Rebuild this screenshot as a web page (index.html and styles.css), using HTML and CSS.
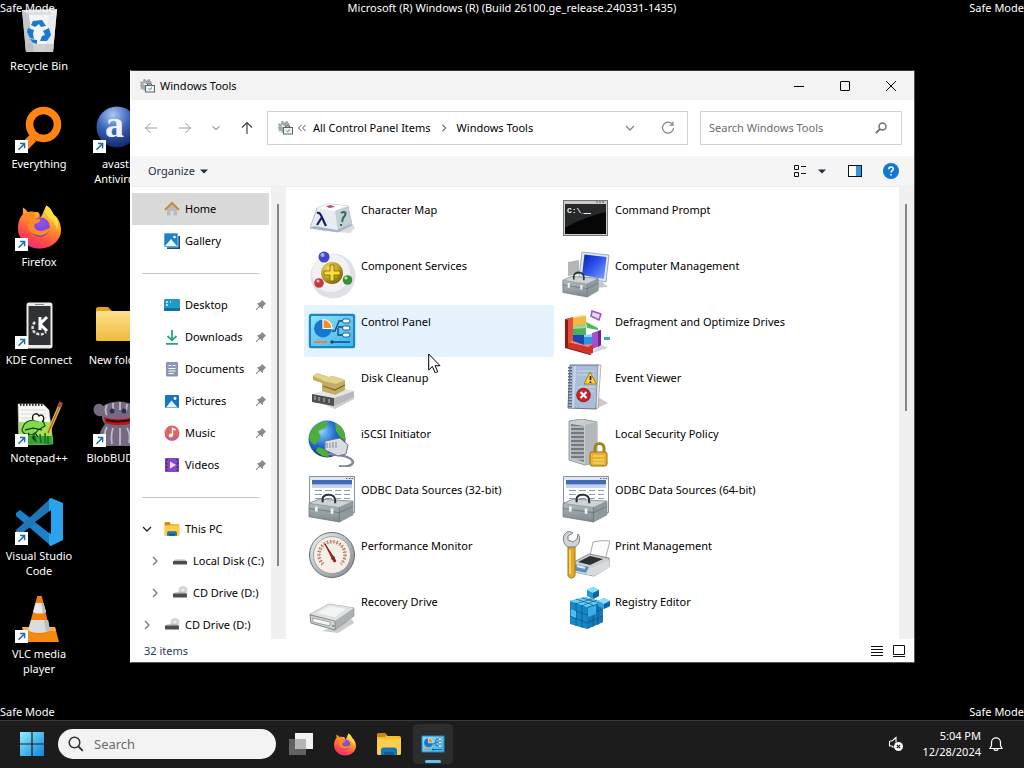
FILE: index.html
```html
<!DOCTYPE html>
<html lang="en">

<head>
    <meta charset="UTF-8">
    <title>Windows Tools</title>
    <link rel="stylesheet" href="styles.css">
</head>

<body>

<!-- icons used more than once -->
<svg class="defs" width="0" height="0">
    <defs>
        <linearGradient id="steel" x1="0" y1="0" x2="1" y2="1"><stop offset="0" stop-color="#f4f6f7"/><stop offset=".5" stop-color="#b4bcc0"/><stop offset="1" stop-color="#7d888d"/></linearGradient>
        <linearGradient id="boxfront" x1="0" y1="0" x2="0" y2="1"><stop offset="0" stop-color="#bcc6c9"/><stop offset="1" stop-color="#7e898d"/></linearGradient>
        <linearGradient id="screen" x1="0" y1="0" x2="1" y2="1"><stop offset="0" stop-color="#0a1fb0"/><stop offset=".45" stop-color="#2b50ea"/><stop offset="1" stop-color="#7fa6f5"/></linearGradient>
        <linearGradient id="gold" x1="0" y1="0" x2="0" y2="1"><stop offset="0" stop-color="#ffe08a"/><stop offset="1" stop-color="#efb93f"/></linearGradient>
        <linearGradient id="ffbody" x1=".8" y1="0" x2=".3" y2="1"><stop offset="0" stop-color="#fff04d"/><stop offset=".4" stop-color="#ff9a28"/><stop offset=".75" stop-color="#ff4b45"/><stop offset="1" stop-color="#ef2a80"/></linearGradient>
        <radialGradient id="ffcore" cx=".55" cy=".3" r=".8"><stop offset="0" stop-color="#a04cf0"/><stop offset="1" stop-color="#4b49c8"/></radialGradient>
        <linearGradient id="cplbg" x1="0" y1="0" x2="1" y2="1"><stop offset="0" stop-color="#8fe0fa"/><stop offset="1" stop-color="#43b4e8"/></linearGradient>
        <radialGradient id="globe" cx=".35" cy=".3" r=".75"><stop offset="0" stop-color="#8fd0ff"/><stop offset=".5" stop-color="#1f6fd0"/><stop offset="1" stop-color="#0c2c80"/></radialGradient>
        <radialGradient id="brass" cx=".35" cy=".3" r=".8"><stop offset="0" stop-color="#f5e06a"/><stop offset=".6" stop-color="#b79a1e"/><stop offset="1" stop-color="#6d5a0a"/></radialGradient>
        <radialGradient id="avastball" cx=".4" cy=".2" r=".9"><stop offset="0" stop-color="#a9c8f5"/><stop offset=".45" stop-color="#3a62b8"/><stop offset="1" stop-color="#0b1a55"/></radialGradient>
        <linearGradient id="winlogo" x1="0" y1="0" x2="1" y2="1"><stop offset="0" stop-color="#8ff0ff"/><stop offset="1" stop-color="#0c84dc"/></linearGradient>
    </defs>
    <symbol id="shortcut" viewBox="0 0 13 13">
        <rect width="13" height="13" fill="#fff"/>
        <path d="M3.500 9.800 9 4.200M5 3.600h4.600v4.600" fill="none" stroke="#1d6ba8" stroke-width="1.500"/>
    </symbol>
    <symbol id="pin" viewBox="0 0 12 12">
        <path d="M7 .8 11.200 5 9.800 5.600 8.200 7.600 7.600 10.200 5.200 7.800 1.400 11.200.8 10.600 4.200 6.800 1.800 4.400 4.400 3.800 6.400 2.200z" fill="#8a8a8a"/>
    </symbol>
    <symbol id="tools" viewBox="0 0 16 16">
        <path d="M4.500 1h2l.4 1.400h1L9 1.200h1.800l.4 1.600 1.300.4V6H6v6.500H4.600L3.900 11l-1.400.6-1-1.100.7-1.400L1 8.500V7l1.200-.8L.8 4.400l1.400-1.200 1.600.7z" fill="#a3a8ab"/>
        <circle cx="5.600" cy="6" r="1.300" fill="#e4e7e9"/>
        <path d="M8.500 7.500V6h4v1.500" fill="none" stroke="#5c666c"/>
        <rect x="6.500" y="7.500" width="9" height="6.500" fill="#f1f4f5" stroke="#56666e"/>
        <path d="m9.300 10.500 1.300 1.300L13 9.500" fill="none" stroke="#46677c"/>
    </symbol>
    <symbol id="firefox" viewBox="0 0 48 48">
        <path d="M31 3c5 3 6 7 8 10 3 1 7 8 7 15 0 11-10 19-22 19S2 38 2 26c0-6 2-11 5-14V5c2 1 4 3 5 5 3-1 5-1 8 0 3-1 5 2 4 5 3 0 4-7 7-12z" fill="url(#ffbody)"/>
        <circle cx="24.500" cy="25" r="10" fill="url(#ffcore)"/>
        <path d="M7 12c4-2 8-2 13-2-2 2-2 4 0 6l5 1c0 3-4 4-6 5-1 4 2 7 6 7 5 0 7-3 10-3-2 6-8 9-14 7C13 31 10 24 13 18l-6-6z" fill="#ff8a22"/>
        <path d="M31 3c5 3 6 7 8 10 3 3 5 9 3 15-1-5-4-10-8-12-3-3-5-8-3-13z" fill="#ffdf3e"/>
    </symbol>
    <symbol id="explorer" viewBox="0 0 26 24">
        <path d="M1 3c0-1 .6-2 2-2h6l2.500 3H23c1.200 0 2 .7 2 2v15c0 1-.7 2-2 2H3c-1.200 0-2-.8-2-2z" fill="#f5bc2d"/>
        <path d="M1 3c0-1 .6-2 2-2h6l1.500 2L9 5H1z" fill="#c8860c"/>
        <path d="M1 7h24v14c0 1-.7 2-2 2H3c-1.200 0-2-.8-2-2z" fill="#fdce4e"/>
        <path d="M5 23v-5c0-1.600 1-2.500 2.500-2.500h11c1.600 0 2.500 1 2.500 2.500v5z" fill="#1677b8"/>
        <path d="M8 23v-3h10v3z" fill="#0f5c93"/>
    </symbol>
    <symbol id="cpl" viewBox="0 0 48 36">
        <rect x=".8" y=".8" width="46.400" height="34.400" rx="2.500" fill="#1c86c8"/>
        <rect x="3" y="3" width="42" height="30" rx="1" fill="url(#cplbg)"/>
        <circle cx="15" cy="15.500" r="9" fill="#1479cc"/>
        <path d="M15 15.500V6.500a9 9 0 0 1 9 9z" fill="#ff8a1f" stroke="#fff" stroke-width="1.200"/>
        <path d="M24 18h3l4-10h4M30 14h5M30 15v7h5" fill="none" stroke="#0d4c7c" stroke-width="1.300"/>
        <g fill="#fff" stroke="#135f96"><rect x="34.500" y="6" width="7.500" height="4" rx="2"/><rect x="34.500" y="13" width="7.500" height="4" rx="2"/><rect x="34.500" y="20" width="7.500" height="4" rx="2"/></g>
        <path d="M6 29h13" stroke="#e7852c" stroke-width="2"/>
        <path d="M23 29h19" stroke="#1668a6" stroke-width="2"/>
        <circle cx="24" cy="29" r="1.800" fill="#0d4c7c"/>
    </symbol>
    <symbol id="toolbox" viewBox="0 0 44 29" preserveAspectRatio="none">
        <path d="m1 10 10-4 32 2v13l-13 7L1 23z" fill="url(#boxfront)" stroke="#69757b" stroke-width=".7"/>
        <path d="m1 10 10-4 32 2-13 6z" fill="#cdd4d6" stroke="#7b868b" stroke-width=".5"/>
        <path d="m30 14 13-6v13l-13 7z" fill="#8f9a9e"/>
        <path d="m1 15 29 4 13-6M30 14v14" fill="none" stroke="#68747a" stroke-width=".8"/>
        <path d="M14 9V6c0-6 12-6 12 1v3" fill="none" stroke="#2d3336" stroke-width="2"/>
        <path d="M8 13v5M23 15v5" stroke="#f1f4f4" stroke-width="2.500"/>
    </symbol>
    <symbol id="odbc" viewBox="0 0 48 48">
        <path d="M1.500 1.500h45v36h-45z" fill="#fff" stroke="#8793a0"/>
        <path d="M2 2h44v3H2z" fill="#dfe6ee"/>
        <path d="M4 5h40v4.500H4z" fill="#4568b6"/>
        <path d="M4 10h40v3H4z" fill="#c3d3ec"/>
        <path d="M38 3.500h1.500m1.500 0h1.500m1 0H45" stroke="#5a6a80"/>
        <path d="M7 15.500h7m3 0h7m3 0h6m3 0h6M7 19.500h7m3 0h7m3 0h6m3 0h6M7 23.500h7m3 0h7m3 0h6m3 0h6M36 27.500h6" stroke="#8d9bab" stroke-width="1.200"/>
        <use href="#toolbox" x="0" y="18" width="46" height="30"/>
    </symbol>
    <symbol id="cd" viewBox="0 0 16 16">
        <circle cx="11" cy="5.500" r="4.500" fill="#d6d6d6"/><circle cx="11" cy="5.500" r="1.300" fill="#f7f7f7"/>
        <path d="m3 7.500 9-1 2.500 2h-13z" fill="#b9b9b9"/><rect x="1" y="8.500" width="14" height="4" rx=".5" fill="#4a4d50"/>
    </symbol>
    <symbol id="chevron" viewBox="0 0 10 10"><path d="m3 1 4 4-4 4" fill="none" stroke="currentColor" stroke-width="1.300"/></symbol>
    <symbol id="chevron-down" viewBox="0 0 10 10"><path d="m1 3 4 4 4-4" fill="none" stroke="currentColor" stroke-width="1.300"/></symbol>
</svg>

<main class="desktop">

    <div class="icons">
        <a class="shortcut" href="#">
            <svg class="pic" viewBox="0 0 48 48">
                <path d="m7 2 35-1-4 43H11z" fill="#dcdfe2"/>
                <path d="m7 2 7 5 5 37h-8z" fill="#c3c7ca"/><path d="m42 1-8 6-4 37h8z" fill="#e9ebed"/>
                <path d="M14 7h20l-4 37H19z" fill="#f3f4f5"/><path d="M10 36h29l-1 8H11z" fill="#bcb9b6" opacity=".6"/>
                <g fill="#1a78cf"><path d="m18 13 9-1 4 6-5 1-2-3-4 3-4-2z"/><path d="m13 20 6 2-1 4 1 5-4-1-3-6z"/><path d="m34 20 2 7-4 6h-7l2-5 3-1-2-4z"/><path d="m15 31 7 1v4l-4-1z"/></g>
            </svg>
            <span>Recycle Bin</span>
        </a>
        <a class="shortcut" href="#">
            <svg class="pic" viewBox="0 0 48 48">
                <path d="m18 32-9 9" stroke="#ff8412" stroke-width="9"/><circle cx="28.500" cy="18.500" r="14" fill="none" stroke="#ff8412" stroke-width="7.500"/>
                <use href="#shortcut" x="0" y="34" width="13" height="13"/>
            </svg>
            <span>Everything</span>
        </a>
        <a class="shortcut" href="#">
            <svg class="pic" viewBox="0 0 48 48"><use href="#firefox" x="1" y="-2" width="47" height="48"/><use href="#shortcut" x="0" y="34" width="13" height="13"/></svg>
            <span>Firefox</span>
        </a>
        <a class="shortcut" href="#">
            <svg class="pic" viewBox="0 0 48 48">
                <rect x="12.500" y="1.500" width="24" height="44" rx="1.500" fill="#2f3235" stroke="#e9ebec" stroke-width="2"/>
                <path d="M13 43h23v3H13zM13 1h23v3H13z" fill="#e9ebec"/><path d="M20 2.500h9" stroke="#888"/>
                <path d="M25 15v13M32 15l-7 7 7 7" fill="none" stroke="#fff" stroke-width="3"/>
                <path d="M20 20c-4 4-3 11 3 12 3 1 6 0 8-2" fill="none" stroke="#ddd" stroke-width="2.500" stroke-dasharray="3 1.500"/>
                <use href="#shortcut" x="0" y="34" width="13" height="13"/>
            </svg>
            <span>KDE Connect</span>
        </a>
        <a class="shortcut" href="#">
            <svg class="pic" viewBox="0 0 48 48">
                <path d="M3 4h25l6 6 4 34-34 1z" fill="#f7f8f2" stroke="#bbb" stroke-width=".6"/>
                <path d="M4 22h32l2 22-34 1z" fill="#a6df55"/><path d="M12 36h25l1 8-32 1z" fill="#36a436"/>
                <path d="M5 4.500h23" stroke="#333" stroke-width="3" stroke-dasharray="1.500 1.500"/>
                <path d="M6 10h25M6 14h25M6 18h25" stroke="#c8d3dc" stroke-width=".8"/>
                <path d="M8 27c2-6 8-8 14-6l6-1 2 6-7 4c-2 4-7 6-12 4-4-1-5-4-3-7z" fill="#7fdc48" stroke="#154c12" stroke-width="1.200"/>
                <path d="M18 20c-2-6 4-8 6-4 3-3 7 2 3 6" fill="#fff" stroke="#111" stroke-width="1.300"/><path d="m10 30 8-2 9 2M14 33l-3 5M20 33l3 4" fill="none" stroke="#111" stroke-width="1.200"/>
                <path d="m17 38 2-4 2 8m4-8 1 9m4-10v10m3-7v8" stroke="#136b19" stroke-width="1.500"/>
                <path d="M46 3 33 33" stroke="#e4b145" stroke-width="3.500"/><path d="M46 3 33 33" stroke="#8d5b1c" stroke-width="1"/><path d="m46 2-2 5" stroke="#a0434b" stroke-width="3.500"/>
                <use href="#shortcut" x="0" y="34" width="13" height="13"/>
            </svg>
            <span>Notepad++</span>
        </a>
        <a class="shortcut" href="#">
            <svg class="pic" viewBox="0 0 48 48">
                <path d="M1 15 5 12l33 26-3 9L1 18z" fill="#1982cb"/><path d="M1 32 36 0l3 10L5 37l-4-3z" fill="#1e76b8"/>
                <path d="m36 0 12 5v37l-12 6-2-1V1z" fill="#29a3ee"/><path d="M36 12v24L20 24z" fill="#000"/>
                <use href="#shortcut" x="0" y="34" width="13" height="13"/>
            </svg>
            <span>Visual Studio Code</span>
        </a>
        <a class="shortcut" href="#">
            <svg class="pic" viewBox="0 0 48 48">
                <path d="m7 31 33 0 4 15H11z" fill="#f58a11"/><path d="M7 31h33l1 4H9z" fill="#ffad3c"/>
                <path d="M22 1c0-2 5-2 5 0l8 34c-3 5-19 5-22 0z" fill="#f2800f"/>
                <path d="m20.500 7 8 0 2.500 9c-3 2-10 2-13 0z" fill="#e9e9e9"/><path d="m16 24 17 0 2 10c-3 4-19 4-22 0z" fill="#dcdcdc"/>
                <path d="m26 7 2.500 0 2.500 9-3 1zM29 24h4l2 10-4 2z" fill="#bdbdbd"/>
                <use href="#shortcut" x="0" y="34" width="13" height="13"/>
            </svg>
            <span>VLC media player</span>
        </a>
        <a class="shortcut second row-2" href="#">
            <svg class="pic" viewBox="0 0 48 48">
                <circle cx="24" cy="21" r="20.500" fill="url(#avastball)"/>
                <text class="avast-a" x="12" y="31">a</text>
                <use href="#shortcut" x="0" y="34" width="13" height="13"/>
            </svg>
            <span>avast! Antivirus</span>
        </a>
        <a class="shortcut second row-4" href="#">
            <svg class="pic" viewBox="0 0 48 48">
                <path d="M3 7c0-1 1-2 2-2h10l4 4h25v10H3z" fill="#e0a311"/><rect x="3" y="9" width="44" height="30" rx="1.500" fill="url(#gold)"/>
            </svg>
            <span>New folder</span>
        </a>
        <a class="shortcut second row-5" href="#">
            <svg class="pic" viewBox="0 0 48 48">
                <path d="M1 7c2-4 7-4 9-1 8-6 24-6 31 0 4 4 2 10 0 13 6 7 6 22 1 27H8c-3-7-2-15 4-22-2-2-3-5-3-8-5 1-10-3-8-9z" fill="#776a80"/>
                <path d="M14 5c-2 4-2 7 0 10M20 3v9M27 2v8M34 4l-1 8M14 27c-3 5-3 10-2 16M20 28c-2 6-2 10-1 16M27 28v17M34 28c3 5 3 10 2 15" stroke="#c2b7c9" stroke-width="1.800" fill="none"/>
                <path d="M11 17c8 3 18 3 29 0l-1 6c-8 3-18 3-27 0z" fill="#b8181c"/><path d="M13 20c8 2 16 2 25 0" stroke="#3c0508" stroke-width="2" fill="none"/>
                <circle cx="19" cy="11" r="2.500" fill="#243258"/><circle cx="31" cy="11" r="2.500" fill="#243258"/>
                <use href="#shortcut" x="0" y="34" width="13" height="13"/>
            </svg>
            <span>BlobBUDDY</span>
        </a>
    </div>

    <span class="mark mark-tl">Safe Mode</span>
    <span class="mark mark-top">Microsoft (R) Windows (R) (Build 26100.ge_release.240331-1435)</span>
    <span class="mark mark-tr">Safe Mode</span>
    <span class="mark mark-bl">Safe Mode</span>
    <span class="mark mark-br">Safe Mode</span>

    <section class="window">
        <header class="titlebar">
            <svg class="i16"><use href="#tools"/></svg>
            <h1>Windows Tools</h1>
            <button type="button" aria-label="Minimize"><svg viewBox="0 0 12 12"><path d="M1 6.500h10" stroke="#000"/></svg></button>
            <button type="button" aria-label="Maximize"><svg viewBox="0 0 12 12"><rect x="1.500" y="1.500" width="9" height="9" rx=".5" fill="none" stroke="#000"/></svg></button>
            <button type="button" aria-label="Close"><svg viewBox="0 0 12 12"><path d="m1 1 10 10M11 1 1 11" stroke="#000"/></svg></button>
        </header>

        <nav class="navbar">
            <div class="history">
                <button type="button" aria-label="Back"><svg viewBox="0 0 14 14"><path d="M13 7H1.500M6.500 2l-5 5 5 5" fill="none" stroke="#9b9b9b"/></svg></button>
                <button type="button" aria-label="Forward"><svg viewBox="0 0 14 14"><path d="M1 7h11.500M7.500 2l5 5-5 5" fill="none" stroke="#9b9b9b"/></svg></button>
                <button type="button" class="recent" aria-label="Recent"><svg viewBox="0 0 14 14"><path d="m3.500 5.500 3.500 3 3.500-3" fill="none" stroke="#9b9b9b" stroke-width="1.200"/></svg></button>
                <button type="button" aria-label="Up"><svg viewBox="0 0 14 14"><path d="M7 13V1.500M2 6.500l5-5 5 5" fill="none" stroke="#444" stroke-width="1.200"/></svg></button>
            </div>
            <div class="address">
                <svg class="i16"><use href="#tools"/></svg>
                <svg class="back2" viewBox="0 0 10 10"><path d="M4.500 2 1.500 5l3 3M8.500 2l-3 3 3 3" fill="none" stroke="#555"/></svg>
                <a href="#">All Control Panel Items</a>
                <svg class="crumb"><use href="#chevron"/></svg>
                <a href="#">Windows Tools</a>
                <button type="button" class="push" aria-label="Previous locations"><svg class="i10"><use href="#chevron-down"/></svg></button>
                <button type="button" aria-label="Refresh"><svg viewBox="0 0 14 14"><path d="M11.500 3.500A5.500 5.500 0 1 0 12.500 7M12 .8v3.400H8.600" fill="none" stroke="#858585" stroke-width="1.200"/></svg></button>
            </div>
            <div class="find">
                <input type="text" placeholder="Search Windows Tools" aria-label="Search Windows Tools">
                <svg viewBox="0 0 12 12"><circle cx="7.500" cy="4.500" r="3.500" fill="none" stroke="#707070" stroke-width="1.500"/><path d="M5 7 .8 11.200" stroke="#707070" stroke-width="1.800"/></svg>
            </div>
        </nav>

        <div class="toolbar">
            <button type="button" class="organize">Organize <svg viewBox="0 0 8 5"><path d="M0 .5h8l-4 4z" fill="#1e2f45"/></svg></button>
            <button type="button" aria-label="View"><svg width="14" height="14" viewBox="0 0 14 14"><path d="M1.500 1.500h4v4h-4zM1.500 8.500h4v4h-4z" fill="none" stroke="#111"/><path d="M8 2.500h5M8 9.500h5" stroke="#111"/></svg></button>
            <button type="button" class="more" aria-label="More view options"><svg width="8" height="5" viewBox="0 0 8 5"><path d="M0 .5h8l-4 4z" fill="#1e2f45"/></svg></button>
            <button type="button" class="pane" aria-label="Preview pane"><svg width="14" height="12" viewBox="0 0 14 12"><rect x=".5" y=".5" width="13" height="11" fill="#fff" stroke="#111"/><path d="M8 1h5v10H8z" fill="#2f96e0"/></svg></button>
            <button type="button" class="help" aria-label="Help"><svg width="16" height="16" viewBox="0 0 16 16"><circle cx="8" cy="8" r="8" fill="#0f78d4"/><path d="M5.800 6.200c0-3 4.400-3 4.400-.2 0 1.700-2.200 1.700-2.200 3.500M8 11v1.600" fill="none" stroke="#fff" stroke-width="1.500"/></svg></button>
        </div>

        <div class="panes">
            <nav class="side">
                <a class="row active" href="#"><svg class="i16 at" viewBox="0 0 16 16"><path d="M3 8v6.500h3.500V10h3v4.500H13V8L8 3.500z" fill="#b9bbbe"/><path d="m1 9 7-7 7 7" fill="none" stroke="#c98b3c" stroke-width="2"/></svg>Home</a>
                <a class="row" href="#"><svg class="i16 at" viewBox="0 0 16 16"><path d="M3 3h13v13H3z" fill="#14517f"/><path d="M0 0h14v14H0z" fill="#1b83cd" stroke="#fff" stroke-width=".6"/><path d="m1 13 6-7 6 7z" fill="#eaf6ff"/><circle cx="10.500" cy="4" r="1.300" fill="#fff"/></svg>Gallery</a>
                <hr>
                <a class="row" href="#"><svg class="i16 at" viewBox="0 0 16 16"><rect y="2" width="16" height="12" rx="1" fill="#1f9bc6"/><path d="M0 11h16v2q0 1-1 1H1q-1 0-1-1z" fill="#146f9c"/><path d="M2 5h2M2 8h2M6 5h1" stroke="#d9f6ff" stroke-width="1.500"/></svg>Desktop<svg class="pin"><use href="#pin"/></svg></a>
                <a class="row" href="#"><svg class="i16 at" viewBox="0 0 16 16"><path d="M8 1v10M3.500 7 8 11.300 12.500 7M2 14.800h12" fill="none" stroke="#2ba283" stroke-width="1.800"/></svg>Downloads<svg class="pin"><use href="#pin"/></svg></a>
                <a class="row" href="#"><svg class="i16 at" viewBox="0 0 16 16"><rect x="2" y="1" width="12" height="14.500" rx="1" fill="#8b98b5"/><path d="M4.500 4.500h3M4.500 7.500h7M4.500 10h7M4.500 12.500h5M9 4.500h2.500" stroke="#fff" stroke-width="1.200"/></svg>Documents<svg class="pin"><use href="#pin"/></svg></a>
                <a class="row" href="#"><svg class="i16 at" viewBox="0 0 16 16"><rect x="1" y="2" width="14" height="13" rx="1" fill="#1676c0"/><path d="m2 14.500 5.500-7 6 7z" fill="#eaf6ff"/><circle cx="11" cy="5.500" r="1.400" fill="#fff"/></svg>Pictures<svg class="pin"><use href="#pin"/></svg></a>
                <a class="row" href="#"><svg class="i16 at" viewBox="0 0 16 16"><circle cx="8" cy="8" r="7.500" fill="#e0665f"/><path d="M1 11a7.500 7.500 0 0 0 14 0z" fill="#c7618b"/><path d="M8.500 10.500V3.500l3 1.500" fill="none" stroke="#fff" stroke-width="1.400"/><circle cx="6.800" cy="10.500" r="2" fill="#fff"/></svg>Music<svg class="pin"><use href="#pin"/></svg></a>
                <a class="row" href="#"><svg class="i16 at" viewBox="0 0 16 16"><rect x="1" y="1" width="14" height="14" rx="1" fill="#8546cf"/><path d="M2.500 2v12M13.500 2v12" stroke="#452183" stroke-width="1.600" stroke-dasharray="2 1.500"/><path d="m6 4.500 6 3.500-6 3.500z" fill="#f0e2ff"/></svg>Videos<svg class="pin"><use href="#pin"/></svg></a>
                <hr>
                <a class="row tree" href="#"><svg class="exp open"><use href="#chevron-down"/></svg><svg class="i16 at"><use href="#explorer"/></svg>This PC</a>
                <a class="row tree sub" href="#"><svg class="exp"><use href="#chevron"/></svg><svg class="i16 at" viewBox="0 0 16 16"><path d="m3 6.500h10l2 2H1z" fill="#b9b9b9"/><rect x="1" y="8" width="14" height="3.500" rx=".5" fill="#4a4d50"/></svg>Local Disk (C:)</a>
                <a class="row tree sub" href="#"><svg class="exp"><use href="#chevron"/></svg><svg class="i16 at"><use href="#cd"/></svg>CD Drive (D:)</a>
                <a class="row tree" href="#"><svg class="exp"><use href="#chevron"/></svg><svg class="i16 at"><use href="#cd"/></svg>CD Drive (D:)</a>
            </nav>
            <div class="scroll"><div class="thumb long"></div></div>

            <div class="files">
                <a class="file" href="#">
                    <svg viewBox="0 0 48 48"><path d="M8 35 42 38l5-5-6-9z" fill="#bbb" opacity=".5"/><path d="m9 13 11-4 20 2 4 19-14 7-28-4z" fill="#e8edf2" stroke="#9aa6b0" stroke-width=".7"/><path d="m9 13 18 3 13-5-20-2z" fill="#fff"/><path d="m27 16 13-5 4 19-14 7z" fill="#c2d1d5"/><path d="m2 33 4-2 23 4 14-6 1 1-14 7z" fill="#9fb3c8"/><path d="M9 18c4-1 4 3 9 13M14 22l-5 8" fill="none" stroke="#1b1e6b" stroke-width="2.200"/><path d="M33 18c5-3 6 1 2 5l-1 4M33 29v2" fill="none" stroke="#34685c" stroke-width="2"/><path d="m18 11 5-1 4 2-6 1z" fill="#b4545c"/></svg>
                    <span>Character Map</span>
                </a>
                <a class="file" href="#">
                    <svg viewBox="0 0 48 48"><rect x="1.500" y="5.500" width="44" height="35" fill="#c9ccce" stroke="#777"/><path d="M3 9h41v30H3z" fill="#060606"/><path d="M3 9h41v8C28 21 14 26 3 33z" fill="#26282a"/><path d="M34 7h2m1 0h2m1 0h2" stroke="#555"/><text class="prompt" x="5" y="18">C:\_</text><path d="M22 18.500h7" stroke="#eee"/></svg>
                    <span>Command Prompt</span>
                </a>
                <a class="file" href="#">
                    <svg viewBox="0 0 48 48"><circle cx="25" cy="25" r="22.500" fill="#e0e0e8"/><circle cx="23" cy="22" r="19" fill="#f2f2f6"/><circle cx="24" cy="22" r="11" fill="url(#brass)"/><path d="M22 14h4v6h6v4h-6v6h-4v-6h-6v-4h6z" fill="#f8dc3f" stroke="#7a650b" stroke-width=".8"/><circle cx="16" cy="6" r="5.500" fill="#4148c4"/><circle cx="14.500" cy="4" r="2" fill="#aab0ff"/><circle cx="11" cy="32" r="4.800" fill="#c23a42"/><circle cx="10" cy="30" r="1.600" fill="#ffb0b0"/><circle cx="39.500" cy="29" r="4.800" fill="#3a8c36"/><circle cx="38" cy="27" r="1.600" fill="#b6efa8"/></svg>
                    <span>Component Services</span>
                </a>
                <a class="file" href="#">
                    <svg viewBox="0 0 48 48"><path d="m6 11 11-2v14L6 25z" fill="#b2b6b8"/><path d="m20 1 27 3-3 27-27-5z" fill="#e3e8ee" stroke="#8c98a8" stroke-width=".8"/><path d="m22.500 3.500 22 2.500-2.500 22-22-4z" fill="url(#screen)"/><path d="m28 29 12 2 6 5-14 1z" fill="#c5c9cc"/><use href="#toolbox" x="0" y="20" width="37" height="27"/></svg>
                    <span>Computer Management</span>
                </a>
                <a class="file hover" href="#">
                    <svg viewBox="0 0 48 48"><use href="#cpl" x="0" y="6" width="48" height="36"/></svg>
                    <span>Control Panel</span>
                </a>
                <a class="file" href="#">
                    <svg viewBox="0 0 48 48"><path d="m30 46 16-5-8-4z" fill="#d5d5d5"/><path d="m3 12 8-2v27l-6 3-2-1z" fill="#e0503c"/><path d="m3 12 3 1v27l24 7-2 1L3 41z" fill="#8f1a17"/><path d="m11 10 11-2 2 1v10H11z" fill="#f3b842"/><path d="m11 10 11-2 2 1-12 2z" fill="#fbe29a"/><path d="M11 19l13-1v10H11z" fill="#4fae58"/><path d="m11 19 13-1v3l-13 1z" fill="#9adb93"/><path d="M11 28h11v10l-11-2z" fill="#1b46b8"/><path d="M22 28h9v9l-9 1z" fill="#2c92e2"/><path d="m22 28 9-1v3h-9z" fill="#8fd0f5"/><path d="m24 15 12 6v2l-11-2z" fill="#4fb85c"/><path d="m30 26 9-3v15l-8 4z" fill="#a44fc9"/><path d="m36 24 3-1v15l-3 2z" fill="#6c2691"/><path d="m30 4 9 3-2 6-8-4z" fill="#ead5f5" stroke="#9d53c0" stroke-width="1.500"/><path d="m6 35 5-1 11 4 9-1v9l-4 1-21-7z" fill="#cf3228"/><path d="m6 35 5-1 11 4 9-1-5 3z" fill="#f08a70"/><path d="M42 30h6v3h-6z" fill="#41aab8"/></svg>
                    <span>Defragment and Optimize Drives</span>
                </a>
                <a class="file" href="#">
                    <svg viewBox="0 0 48 48"><path d="m10 39 36-9v6L27 46z" fill="#cdced0"/><path d="m4 31 22 4 20-7-18-4z" fill="#e3e5e6"/><path d="m4 31 22 4v8L4 39z" fill="#4c5053"/><path d="m26 35 20-7v6l-20 9z" fill="#b7babc"/><path d="M7 33v4m4-3v4m5-3v4m5-3v4" stroke="#999" stroke-width="1.500"/><path d="m5 13 4-3 12 4 4-1 12 4v10l-10 5-13-4v-8l-9-3z" fill="#c4ad62"/><path d="m5 13 4-3 12 4 4-1 12 4-9 4-12-3z" fill="#e2d28d"/><path d="m15 23 12 4 10-5" fill="none" stroke="#7a682d" stroke-width="1.200"/></svg>
                    <span>Disk Cleanup</span>
                </a>
                <a class="file" href="#">
                    <svg viewBox="0 0 48 48"><path d="m36 34 10 6-12 6z" fill="#ccc"/><path d="M8 2h29l-3 44-28-1z" fill="#a9bdd8" stroke="#62738d"/><path d="M36 2h3l-3 43-2 1z" fill="#eef0f2" stroke="#777" stroke-width=".5"/><path d="M13 3 11 45" stroke="#c9d7ea" stroke-width="2"/><path d="M8 4v40" stroke="#5d6b7d" stroke-width="4" stroke-dasharray="1.500 1.500"/><path d="M15 8h18M15 12h18M15 24h18M14 28h18" stroke="#c8d7ec"/><path d="m28 9 6.500 12H22z" fill="#ffd12b" stroke="#a98009"/><path d="M28.500 13v4m0 1.500V20" stroke="#222" stroke-width="1.700"/><circle cx="21.500" cy="32" r="6.800" fill="#cc2229" stroke="#8b1016" stroke-width=".8"/><path d="m18.500 29 6 6m0-6-6 6" stroke="#fff" stroke-width="2.200"/></svg>
                    <span>Event Viewer</span>
                </a>
                <a class="file" href="#">
                    <svg viewBox="0 0 48 48"><circle cx="19" cy="20" r="18.500" fill="url(#globe)"/><path d="M5 10c4-7 12-8 15-7l-3 6-7 3 3 6-6 8c-5-2-7-8-5-12zM27 4c8 3 11 9 10 18l-5-4-4-6zM10 28l9 3 2 7c-6 0-10-3-13-6z" fill="#4fae38"/><path d="M20 35c12 1 23 2 25 8-1 5-10 5-14 4" fill="none" stroke="#7e88a0" stroke-width="2.500"/><path d="m17 22 15-3 8 7-2 9-8 2-13-6z" fill="#d7dde3" stroke="#6c7683"/><path d="M19 24v5m3-5v5m3-6v6m3-6v6" stroke="#7c8998"/></svg>
                    <span>iSCSI Initiator</span>
                </a>
                <a class="file" href="#">
                    <svg viewBox="0 0 48 48"><path d="m36 38 11 6-14 3-8-4z" fill="#ccc"/><path d="m7 2 13-2 15 3v40l-12 3-16-5z" fill="#c9cdd0" stroke="#7f8689" stroke-width=".8"/><path d="m23 6 12-3v40l-12 3z" fill="#b3b8bb"/><path d="m9 5 13 2v36L9 39z" fill="#737b80"/><path d="M9 8h13M9 12h13M9 16h13M9 20h13M9 24h13M9 28h13M9 32h13M9 36h13M9 40h13" stroke="#c2c7ca" stroke-width="1.500"/><path d="M33 36v-7c0-6 9-6 9 0v7" fill="none" stroke="#a48421" stroke-width="3"/><rect x="28" y="33" width="17" height="14" rx="2" fill="#e8b230" stroke="#99720a"/><path d="M31 37h11M31 41h11M31 44h11" stroke="#fae18a"/></svg>
                    <span>Local Security Policy</span>
                </a>
                <a class="file" href="#"><svg viewBox="0 0 48 48"><use href="#odbc"/></svg><span>ODBC Data Sources (32-bit)</span></a>
                <a class="file" href="#"><svg viewBox="0 0 48 48"><use href="#odbc"/></svg><span>ODBC Data Sources (64-bit)</span></a>
                <a class="file" href="#">
                    <svg viewBox="0 0 48 48"><circle cx="24" cy="24" r="22.500" fill="url(#steel)" stroke="#656b6f"/><circle cx="24" cy="24" r="18.500" fill="#f5efe7" stroke="#a7a7a5"/><path d="M15 33a13 13 0 1 1 18 0" fill="none" stroke="#a06958" stroke-width="3.500" stroke-dasharray="1.200 2"/><path d="M15 33a13 13 0 1 1 18 0" fill="none" stroke="#d3a997" stroke-width=".8"/><path d="m17 13 11 17-2 1z" fill="#9e2222" stroke="#8c1b1b"/><circle cx="25" cy="27" r="2" fill="#76382e"/></svg>
                    <span>Performance Monitor</span>
                </a>
                <a class="file" href="#">
                    <svg viewBox="0 0 48 48"><path d="m28 25 3-14c5-1 11-2 17-1l-5 19z" fill="#fbfbfb" stroke="#a9a9a9"/><path d="m12 31 15-8 20 4v9L32 45l-20-4z" fill="#cbcfd1" stroke="#888"/><path d="m16 31 12-6 13 3-13 6z" fill="#2d3032"/><path d="m12 34 18 3 17-8v8l-15 8-20-4z" fill="#d9dcde"/><path d="m11 33 16 3-3 6-13-3z" fill="#5b91bb"/><path d="m15 35 8 2" stroke="#e2f1ff" stroke-width="2"/><path d="M6 16h7v28c0 4-7 4-7 0z" fill="#e6a91f" stroke="#a27314"/><path d="M8 19v24" stroke="#ffe08a" stroke-width="1.500"/><path d="M5 1c-6 4-4 13 1 15h7c5-3 6-9 3-13l-1 5-4 3-5-2v-4l5-3c-2-1-4-2-6-1z" fill="#cfd4d6" stroke="#798084"/></svg>
                    <span>Print Management</span>
                </a>
                <a class="file" href="#">
                    <svg viewBox="0 0 48 48"><path d="m14 44 16 2 16-10-2-4z" fill="#ccc"/><path d="m2 27 19-10 25 4v8L27 43 3 36z" fill="#abb0b2" stroke="#81878a" stroke-width=".6"/><path d="m2 27 19-10 25 4-19 13z" fill="#dfe2e3"/><path d="m9 26 13-7 16 3-11 8z" fill="#f3f4f4"/><path d="m2 28 25 6v9L3 36z" fill="#ced2d4" stroke="#777" stroke-width=".7"/><path d="m5 31 17 4v4L5 35z" fill="#f5f5f5" stroke="#777" stroke-width=".6"/><circle cx="25" cy="39" r="1" fill="#54a53f"/></svg>
                    <span>Recovery Drive</span>
                </a>
                <a class="file" href="#">
                    <svg viewBox="0 0 48 48"><path d="m8 14 15-4 18 5v20L25 42 8 37z" fill="#1688c8"/><path d="m8 14 15-4 18 5-16 5z" fill="#6ad1f5"/><path d="m25 20 16-5v20l-16 7z" fill="#1878b8"/><path d="m14 12 17 6M20 11l17 5M13 17l17-5M19 19l16-6M8 22l17 6 16-6M8 29l17 7 16-7" fill="none" stroke="#0a5288" stroke-width=".7"/><path d="M14 16v23M20 18v23M31 18v22M36 17v21" stroke="#0a5288" stroke-width=".7"/><path d="m26 21 8-3v9l-8 3z" fill="#38b0e6"/><path d="m9 22 5 2v7l-5-2z" fill="#47bdf0"/><path d="m25 3 6-3 6 3v6l-6 3-6-3z" fill="#2197d3"/><path d="m25 3 6-3 6 3-6 3z" fill="#8adffb"/><path d="m31 6 6-3v6l-6 3z" fill="#11659c"/><path d="m36 14 6-3 6 3v5l-6 3-6-3z" fill="#2ba4dc"/><path d="m36 14 6-3 6 3-6 3z" fill="#8adffb"/><path d="m42 17 6-3v5l-6 3z" fill="#11659c"/></svg>
                    <span>Registry Editor</span>
                </a>
            </div>
            <div class="scroll"><div class="thumb short"></div></div>
        </div>

        <footer class="status">
            <span>32 items</span>
            <button type="button" aria-label="Details"><svg viewBox="0 0 14 14"><path d="M1 2.500h12M1 5.500h12M1 8.500h12M1 11.500h12" stroke="#111"/></svg></button>
            <button type="button" aria-label="Large icons"><svg viewBox="0 0 14 14"><path d="M1.500 1.500h11v9h-11zM1 12.500h12" fill="none" stroke="#111"/></svg></button>
        </footer>
    </section>

    <svg class="cursor" viewBox="0 0 13 21"><path d="M.7 1v16l3.700-3.500 2.700 6.300 2.600-1.100-2.600-6H12z" fill="#fff" stroke="#000"/></svg>
</main>

<footer class="taskbar">
    <button type="button" class="start" aria-label="Start"><svg viewBox="0 0 24 24"><path d="M0 0h11.400v11.400H0zM12.600 0H24v11.400H12.600zM0 12.600h11.400V24H0zM12.600 12.600H24V24H12.600z" fill="url(#winlogo)"/></svg></button>
    <div class="search">
        <svg viewBox="0 0 16 16"><circle cx="6.500" cy="6.500" r="5.300" fill="none" stroke="#333" stroke-width="1.500"/><path d="m10.500 10.500 4.300 4.300" stroke="#333" stroke-width="1.800"/></svg>
        <input type="text" placeholder="Search" aria-label="Search">
    </div>
    <button type="button" class="app first" aria-label="Task view"><svg viewBox="0 0 24 24"><rect y="7" width="17" height="16" fill="#626262"/><rect x="6" y="1" width="18" height="16" fill="#f2f2f2"/><path d="M6 7h11v10H6z" fill="#b5b5b5"/></svg></button>
    <button type="button" class="app" aria-label="Firefox"><svg><use href="#firefox"/></svg></button>
    <button type="button" class="app" aria-label="File Explorer"><svg class="wide"><use href="#explorer"/></svg></button>
    <button type="button" class="app running" aria-label="Windows Tools"><svg><use href="#cpl"/></svg></button>
    <button type="button" class="tray" aria-label="Volume"><svg width="16" height="16" viewBox="0 0 16 16"><path d="M1.500 5h2.500l4-3.500v5M1.500 5v5h2.500l1.500 1.500" fill="none" stroke="#fff" stroke-width="1.100"/><circle cx="10.500" cy="10.500" r="4.500" fill="#fff"/><path d="m8.800 8.800 3.400 3.400m0-3.400-3.400 3.400" stroke="#1c1c1c" stroke-width="1.200"/></svg></button>
    <time>5:04 PM<br>12/28/2024</time>
    <button type="button" class="bell" aria-label="Notifications"><svg width="16" height="16" viewBox="0 0 16 16"><path d="M3.500 9.500V6.300a4.500 4.500 0 0 1 9 0v3.200l1.500 3H2zM6 13c.5 2 3.500 2 4 0" fill="none" stroke="#fff" stroke-width="1.200"/></svg></button>
</footer>

</body>

</html>
```
FILE: styles.css
```css
* {
    box-sizing: border-box;
}

body {
    margin: 0;
    height: 100vh;
    display: flex;
    flex-direction: column;
    overflow: hidden;
    background: #000;
    font-family: "Noto Sans", "Open Sans", sans-serif;
    font-size: 11px;
    line-height: 16px;
    color: #000;
}

a {
    color: inherit;
    text-decoration: none;
}

button {
    display: flex;
    align-items: center;
    justify-content: center;
    padding: 0;
    border: 0;
    background: none;
    font: inherit;
    color: inherit;
}

input {
    min-width: 0;
    flex: 1;
    padding: 0;
    border: 0;
    outline: 0;
    background: none;
    font: inherit;
}

input::placeholder {
    color: #6b6b6b;
}

svg {
    flex: none;
    display: block;
}

.defs {
    position: absolute;
}

.i16 {
    width: 16px;
    height: 16px;
}

.i10 {
    width: 10px;
    height: 10px;
}

/* desktop */

.desktop {
    position: relative;
    flex: 1;
    min-height: 0;
}

.icons {
    display: grid;
    grid-template-columns: 78px 78px;
    grid-auto-rows: 98px;
    padding-top: 8px;
}

.shortcut {
    grid-column: 1;
    display: flex;
    flex-direction: column;
    align-items: center;
    gap: 2px;
    padding: 0 4px;
    line-height: 15px;
    text-align: center;
    color: #fff;
}

.shortcut .pic {
    width: 48px;
    height: 48px;
}

.second { grid-column: 2; }
.row-2 { grid-row: 2; }
.row-4 { grid-row: 4; }
.row-5 { grid-row: 5; }

.avast-a {
    font: bold 38px "Liberation Serif", serif;
    fill: #eef3fb;
}

.mark {
    position: absolute;
    color: #fff;
}

.mark-tl { top: 0; left: 0; }
.mark-tr { top: 0; right: 0; }
.mark-bl { bottom: 0; left: 0; }
.mark-br { bottom: 0; right: 0; }

.mark-top {
    top: 0;
    left: 0;
    right: 0;
    text-align: center;
}

/* explorer window */

.window {
    position: absolute;
    top: 70px;
    left: 130px;
    right: 109px;
    bottom: 57px;
    display: flex;
    flex-direction: column;
    background: #fff;
    border: 1px solid #38343a;
    border-color: #38343a #555 #555 #fff;
}

.titlebar {
    display: flex;
    align-items: center;
    height: 29px;
    padding-left: 8px;
    background: #f3f3f3;
}

.titlebar h1 {
    margin: 0 auto 0 5px;
    font-size: 11px;
    font-weight: normal;
}

.titlebar button {
    width: 46px;
    height: 29px;
}

.titlebar button svg {
    width: 12px;
    height: 12px;
}

.navbar {
    display: flex;
    align-items: center;
    gap: 12px;
    height: 56px;
    padding: 0 12px 0 13px;
}

.history {
    display: flex;
    align-items: center;
    gap: 20px;
    margin-right: 1px;
}

.history svg,
.address button svg {
    width: 14px;
    height: 14px;
}

.history .recent {
    width: 8px;
}

.address,
.find {
    display: flex;
    align-items: center;
    height: 34px;
    border: 1px solid #d2d2d2;
}

.address {
    flex: 1;
    padding: 0 12px 0 9px;
}

.address .back2 {
    width: 10px;
    height: 10px;
    margin: 0 6px 0 4px;
}

.crumb {
    width: 8px;
    height: 8px;
    margin: 0 9px;
    color: #555;
}

.address .push {
    margin-left: auto;
    margin-right: 26px;
    color: #858585;
}

.address .push svg {
    width: 10px;
    height: 10px;
}

.find {
    width: 202px;
    padding: 0 14px 0 8px;
}

.find svg {
    width: 12px;
    height: 12px;
}

.toolbar {
    display: flex;
    align-items: center;
    height: 31px;
    padding: 0 15px 0 17px;
    background: #f5f5f5;
    border-bottom: 1px solid #ececec;
    color: #1e2f45;
}

.organize {
    gap: 5px;
    margin-right: auto;
}

.organize svg {
    width: 8px;
    height: 5px;
}

.more { margin-left: 11px; }
.pane { margin-left: 22px; }
.help { margin-left: 21px; }

.panes {
    flex: 1;
    min-height: 0;
    display: flex;
    overflow: hidden;
}

.side {
    width: 140px;
    padding: 6px 2px 0 1px;
}

.side .row {
    display: flex;
    align-items: center;
    height: 32px;
    padding-left: 32px;
    white-space: nowrap;
}

.side .at {
    margin-right: 5px;
}

.side .active {
    background: #d9d9d9;
}

.side hr {
    height: 1px;
    margin: 16px 10px 15px;
    border: 0;
    background: #c9c9c9;
}

.pin {
    width: 12px;
    height: 12px;
    margin-left: auto;
    margin-right: 2px;
}

.side .tree { padding-left: 10px; }
.side .sub { padding-left: 18px; }

.exp {
    width: 10px;
    height: 10px;
    margin-right: 12px;
    color: #777;
}

.exp.open { color: #222; }

.scroll {
    flex: none;
    width: 15px;
    padding: 17px 0 0 6px;
    background: #f0f0f0;
}

.thumb {
    width: 2px;
    background: #858585;
}

.thumb.long { height: 362px; }
.thumb.short { height: 207px; }

.files {
    flex: 1;
    display: grid;
    grid-template-columns: 250px 250px;
    grid-auto-rows: 52px;
    gap: 4px;
    padding: 6px 0 0 18px;
}

.file {
    display: flex;
    gap: 5px;
    padding: 2px 4px;
}

.file svg {
    width: 48px;
    height: 48px;
}

.file span {
    padding-top: 7px;
}

.file.hover {
    background: #e5f3ff;
}

.prompt {
    font: bold 8px "Liberation Mono", monospace;
    fill: #eee;
}

.status {
    display: flex;
    align-items: center;
    gap: 8px;
    height: 23px;
    padding: 0 8px 0 13px;
    color: #1e395b;
}

.status span {
    margin-right: auto;
}

.status svg {
    width: 14px;
    height: 14px;
}

.cursor {
    position: absolute;
    top: 353px;
    left: 428px;
    width: 13px;
    height: 21px;
}

/* taskbar */

.taskbar {
    display: flex;
    align-items: center;
    height: 48px;
    padding: 0 20px 2px;
    background: #1c1c1c;
    border-top: 1px solid #3a3a3a;
    color: #fff;
}

.start svg {
    width: 24px;
    height: 24px;
}

.search {
    display: flex;
    align-items: center;
    gap: 10px;
    width: 218px;
    height: 30px;
    margin-left: 14px;
    padding: 0 10px;
    border-radius: 15px;
    background: #f3f3f3;
    font-size: 13px;
}

.search svg {
    width: 16px;
    height: 16px;
}

.app {
    position: relative;
    width: 40px;
    height: 40px;
    margin-left: 4px;
    border-radius: 4px;
}

.app.first {
    margin-left: 5px;
}

.app svg {
    width: 24px;
    height: 24px;
}

.app .wide {
    width: 26px;
}

.running {
    background: #2d2d2d;
}

/* line under the open app */
.running::after {
    content: "";
    position: absolute;
    bottom: 1px;
    left: 12px;
    width: 16px;
    height: 3px;
    border-radius: 2px;
    background: #5cc4f0;
}

.tray {
    margin-left: auto;
    margin-right: 18px;
}

time {
    text-align: right;
}

.bell {
    margin-left: 7px;
}
```
